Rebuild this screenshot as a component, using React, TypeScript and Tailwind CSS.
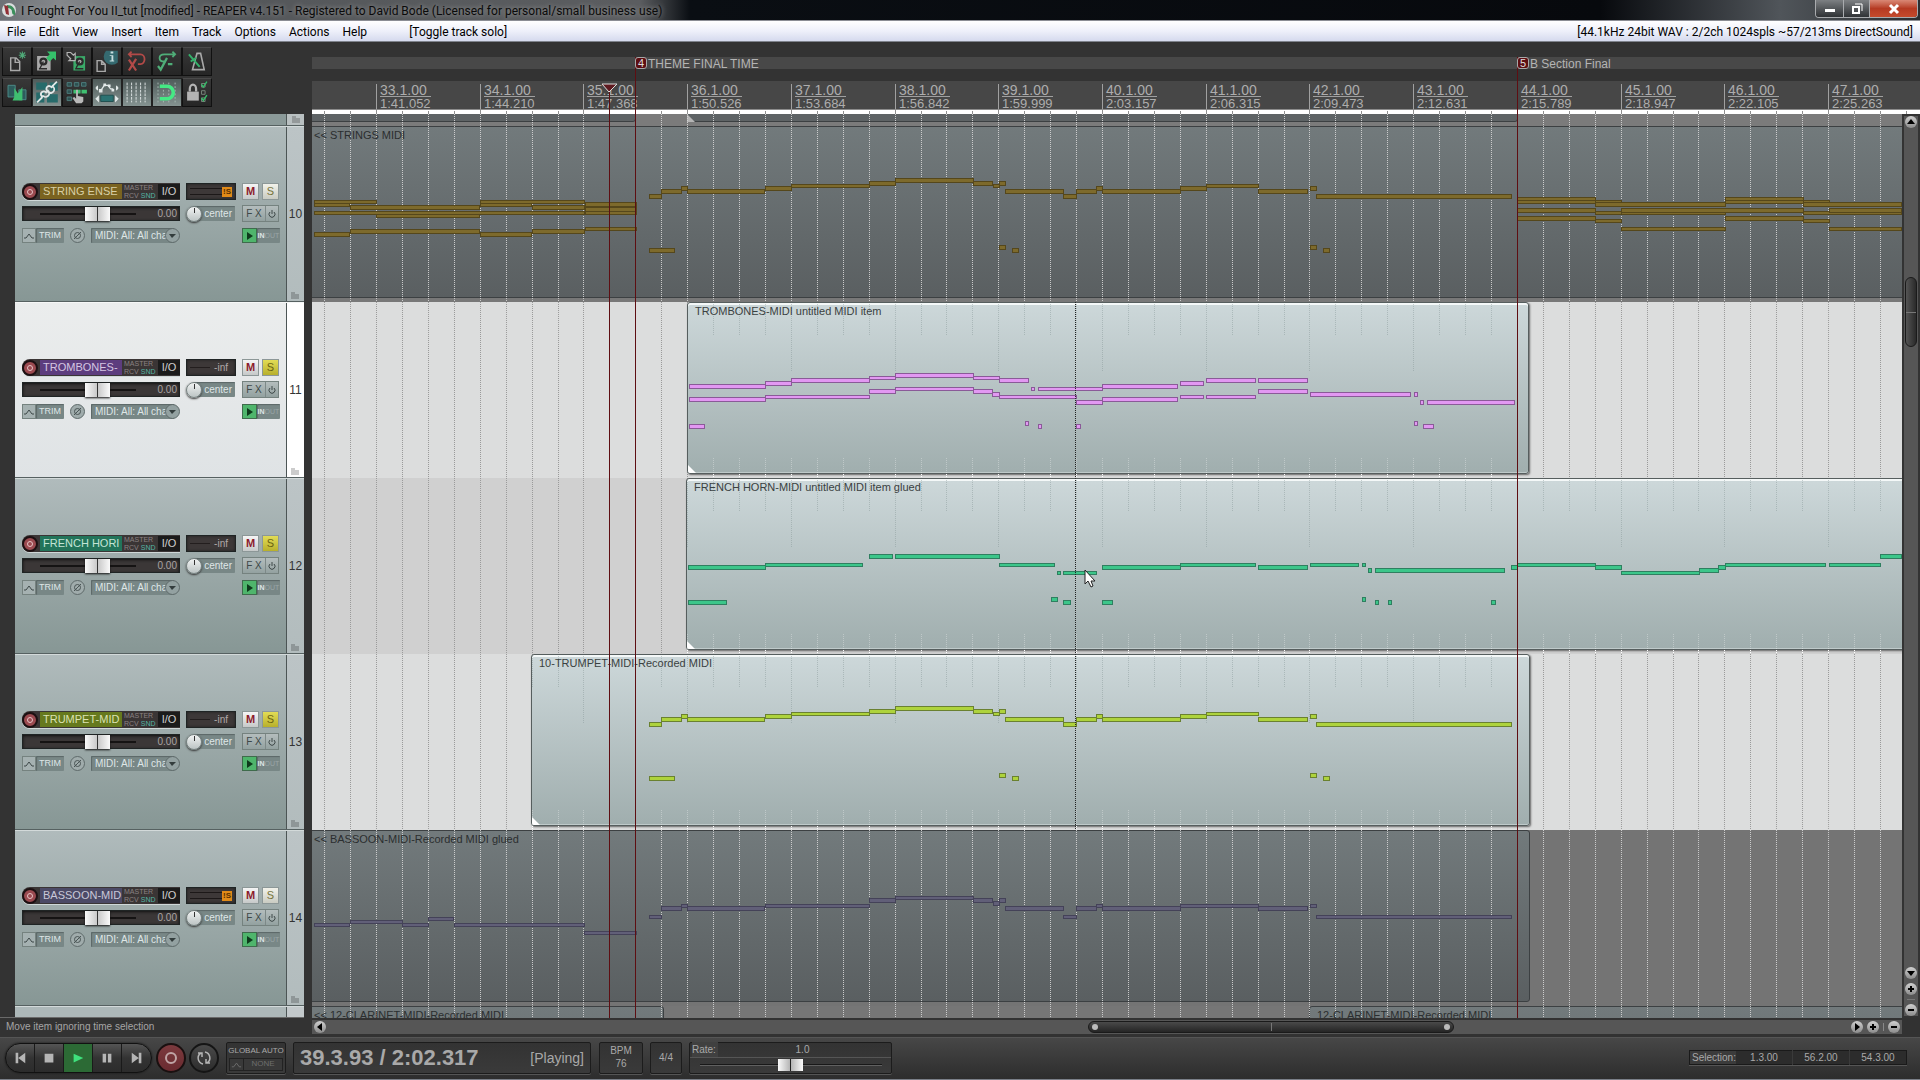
import type { ReactNode } from "react";

type Note = [number, number, number, number];

type Clip = {
  label: string;
  start: number;
  end?: number;
  corner?: boolean;
};

type Track = {
  id: number;
  name: string;
  nameClass: string;
  selected?: boolean;
  solo?: boolean;
  dim?: boolean;
  laneClass: string;
  clips: Clip[];
  notes: Note[];
  fill: string;
  edge: string;
};

// x in the note tables is counted from the window's left side
const ORIGIN = 312;
const BEAT = 25.93;
const FIRST_MEASURE = 64;

const beats = Array.from({ length: 62 }, (_, i) => {
  const k = i - 2;
  return { x: Math.round(FIRST_MEASURE + k * BEAT), measure: k % 4 === 0 };
});

const ruler = [
  ["33.1.00", "1:41.052"],
  ["34.1.00", "1:44.210"],
  ["35.1.00", "1:47.368"],
  ["36.1.00", "1:50.526"],
  ["37.1.00", "1:53.684"],
  ["38.1.00", "1:56.842"],
  ["39.1.00", "1:59.999"],
  ["40.1.00", "2:03.157"],
  ["41.1.00", "2:06.315"],
  ["42.1.00", "2:09.473"],
  ["43.1.00", "2:12.631"],
  ["44.1.00", "2:15.789"],
  ["45.1.00", "2:18.947"],
  ["46.1.00", "2:22.105"],
  ["47.1.00", "2:25.263"],
];

const markers = [
  { num: "4", text: "THEME FINAL TIME", x: 323 },
  { num: "5", text: "B Section Final", x: 1205 },
];

// melody shared by the strings and the trumpet
const melody: Note[] = [
  [649, 68, 13, 5], [661, 63, 21, 5], [681, 60, 7, 5], [687, 63, 78, 5], [765, 60, 27, 5],
  [791, 58, 79, 4], [869, 55, 27, 5], [895, 52, 79, 5], [973, 55, 20, 5], [993, 58, 7, 4],
  [999, 55, 7, 5], [1005, 63, 59, 5], [1063, 68, 14, 5], [1076, 63, 21, 5], [1096, 60, 7, 5],
  [1102, 63, 79, 5], [1180, 60, 27, 5], [1206, 58, 53, 4], [1258, 63, 50, 5], [1310, 60, 7, 5],
  [1316, 68, 196, 5], [649, 122, 26, 5], [999, 119, 7, 5], [1012, 122, 7, 5], [1310, 119, 7, 5],
  [1323, 122, 7, 5],
];

const strings: Note[] = [
  [314, 74, 63, 4], [314, 77, 36, 4], [350, 79, 130, 5], [376, 88, 104, 4], [314, 85, 271, 4],
  [480, 74, 105, 4], [480, 77, 52, 4], [532, 79, 53, 5], [585, 76, 52, 5], [585, 81, 52, 5],
  [585, 85, 52, 4], [314, 106, 36, 5], [350, 103, 130, 5], [480, 106, 52, 5], [532, 103, 53, 5],
  [585, 101, 52, 4],
  ...melody,
  [1517, 74, 79, 4], [1517, 71, 79, 4], [1595, 74, 27, 4], [1595, 76, 131, 5], [1517, 82, 79, 5],
  [1595, 85, 27, 4], [1621, 85, 105, 4], [1621, 82, 183, 5], [1517, 90, 79, 5], [1595, 93, 27, 4],
  [1621, 101, 105, 4], [1725, 74, 79, 4], [1725, 71, 79, 4], [1803, 74, 27, 4], [1803, 76, 99, 5],
  [1803, 85, 99, 4], [1829, 82, 73, 5], [1725, 90, 79, 5], [1803, 93, 27, 4], [1829, 101, 73, 4],
];

const trombones: Note[] = [
  [689, 82, 77, 5], [765, 79, 27, 5], [791, 76, 79, 5], [869, 74, 27, 4], [895, 71, 79, 5],
  [973, 74, 27, 4], [999, 76, 30, 5], [1031, 85, 4, 4], [1038, 85, 65, 4], [1102, 82, 76, 5],
  [1180, 79, 24, 5], [1206, 76, 50, 5], [1258, 76, 50, 5], [689, 95, 77, 5], [765, 93, 105, 4],
  [869, 87, 27, 5], [895, 85, 79, 4], [973, 87, 20, 5], [992, 90, 8, 5], [999, 93, 78, 4],
  [1076, 98, 27, 5], [1102, 95, 76, 5], [1180, 93, 24, 4], [1206, 93, 50, 4], [1258, 87, 50, 5],
  [1310, 90, 101, 5], [1414, 90, 4, 5], [1420, 98, 4, 5], [1427, 98, 88, 5], [689, 122, 16, 5],
  [1025, 119, 4, 5], [1038, 122, 4, 5], [1076, 122, 5, 5], [1414, 119, 4, 5], [1423, 122, 11, 5],
];

const horns: Note[] = [
  [688, 87, 78, 5], [765, 85, 98, 4], [869, 76, 24, 5], [895, 76, 105, 5], [999, 85, 56, 4],
  [1057, 93, 4, 4], [1063, 93, 34, 4], [1102, 87, 79, 5], [1180, 85, 76, 4], [1258, 87, 50, 5],
  [1310, 85, 49, 4], [1362, 85, 4, 4], [1368, 90, 4, 5], [1375, 90, 130, 5], [1511, 87, 7, 5],
  [1517, 85, 79, 4], [1595, 87, 27, 5], [1621, 93, 79, 4], [1699, 90, 20, 5], [1718, 87, 8, 5],
  [1725, 85, 101, 4], [1829, 85, 52, 4], [1880, 76, 22, 5], [688, 122, 39, 5], [1051, 119, 7, 5],
  [1063, 122, 8, 5], [1102, 122, 11, 5], [1362, 119, 4, 5], [1375, 122, 4, 5], [1388, 122, 4, 5],
  [1491, 122, 5, 5],
];

const bassoon: Note[] = [
  [314, 93, 36, 4], [350, 90, 53, 4], [402, 93, 27, 4], [428, 87, 26, 4], [454, 93, 131, 4],
  [584, 101, 53, 4], [649, 85, 13, 4], [661, 76, 21, 5], [681, 74, 7, 4], [687, 76, 78, 5],
  [765, 74, 105, 4], [869, 68, 27, 5], [895, 66, 79, 4], [973, 68, 20, 5], [993, 71, 7, 5],
  [999, 68, 7, 5], [1005, 76, 59, 5], [1063, 85, 14, 4], [1076, 76, 21, 5], [1096, 74, 7, 4],
  [1102, 76, 79, 5], [1180, 74, 79, 4], [1258, 76, 50, 5], [1310, 74, 7, 4], [1316, 85, 196, 4],
];

const tracks: Track[] = [
  {
    id: 10,
    name: "STRING ENSE",
    nameClass: "bg-[#7a6320] text-[#d8cfa6]",
    dim: true,
    laneClass: "bg-[#787878]",
    clips: [{ label: "<< STRINGS MIDI", start: -6 }],
    notes: strings,
    fill: "#7d6a2c",
    edge: "#55471b",
  },
  {
    id: 11,
    name: "TROMBONES-",
    nameClass: "bg-[#5d3d7e] text-[#d5c6e2]",
    selected: true,
    solo: true,
    laneClass: "bg-[#dcdddd]",
    clips: [{ label: "TROMBONES-MIDI untitled MIDI item", start: 375, end: 1217, corner: true }],
    notes: trombones,
    fill: "#e298f2",
    edge: "#8a5a98",
  },
  {
    id: 12,
    name: "FRENCH HORI",
    nameClass: "bg-[#22745a] text-[#c3e4d6]",
    solo: true,
    laneClass: "bg-[#d0d0d0]",
    clips: [{ label: "FRENCH HORN-MIDI untitled MIDI item glued", start: 374, corner: true }],
    notes: horns,
    fill: "#3cc68a",
    edge: "#2f7f60",
  },
  {
    id: 13,
    name: "TRUMPET-MID",
    nameClass: "bg-[#66791d] text-[#dbe2b2]",
    solo: true,
    laneClass: "bg-[#dcdddd]",
    clips: [{ label: "10-TRUMPET-MIDI-Recorded MIDI", start: 219, end: 1218, corner: true }],
    notes: melody,
    fill: "#aed33c",
    edge: "#6a8130",
  },
  {
    id: 14,
    name: "BASSOON-MID",
    nameClass: "bg-[#4c4a66] text-[#c9c8d8]",
    dim: true,
    laneClass: "bg-[#747474]",
    clips: [{ label: "<< BASSOON-MIDI-Recorded MIDI glued", start: -6, end: 1218 }],
    notes: bassoon,
    fill: "#615f78",
    edge: "#444258",
  },
];

const toolButtons: { label: string; on?: boolean; icon: ReactNode }[] = [
  {
    label: "New project",
    icon: (
      <g fill="none" stroke="#a9a9a9" strokeWidth="1.6">
        <path d="M8 11h6l4 4v10H8z M13 11v5h5" />
        <path stroke="#4fa878" strokeWidth="1.2" d="M21 4v8M17 8h8M18 5l6 6M24 5l-6 6" />
      </g>
    ),
  },
  {
    label: "Open project",
    icon: (
      <g>
        <path fill="#a9a9a9" d="M4 9h12v4h3v12H4z" />
        <circle cx="11" cy="15" r="4.5" fill="#2c2c2c" />
        <circle cx="11" cy="15" r="2" fill="#a9a9a9" />
        <path stroke="#2c2c2c" strokeWidth="1.5" d="M11 15l-4 8M6 23h9" />
        <path fill="#35c06a" d="M15 4h10v10l-3-3-4 4-4-4 4-4z" />
      </g>
    ),
  },
  {
    label: "Save project",
    icon: (
      <g>
        <path fill="#3aa968" d="M11 9h13v16H11z" />
        <circle cx="18" cy="15" r="4.5" fill="#2c2c2c" />
        <circle cx="18" cy="15" r="2" fill="#a9a9a9" />
        <path stroke="#2c2c2c" strokeWidth="1.5" d="M18 15l-4 7M13 23h9" />
        <path fill="#2c2c2c" stroke="#b4b4b4" strokeWidth="1.3" d="M4 5h4l3 3 2-2v8H6l2-2-4-4z" />
      </g>
    ),
  },
  {
    label: "Project settings",
    icon: (
      <g>
        <path fill="none" stroke="#a9a9a9" strokeWidth="1.6" d="M4 14h5l4 4v8H4z M9 14v4h4" />
        <path fill="#356a70" d="M14 3h13v13a9 9 0 0 1-13-13z" />
        <path fill="#c9dfe0" d="M19 4h3v2h-3zM18 8h4v6h1v1h-5v-1h2V9h-2z" />
      </g>
    ),
  },
  {
    label: "Undo",
    icon: (
      <g fill="none" stroke="#b34a48" strokeWidth="2">
        <path d="M6 7h13a4 5 0 0 1 0 11h-3M9 4L6 7l3 3" />
        <path strokeWidth="2.5" d="M6 13l8 12M14 12L6 25" />
      </g>
    ),
  },
  {
    label: "Redo",
    icon: (
      <g fill="none" stroke="#4fae78" strokeWidth="2">
        <path d="M24 7H12c-7 0-7 8 0 8M21 4l3 3-3 3" />
        <path strokeWidth="2.5" d="M5 20l3 4 7-13M16 18h5" />
      </g>
    ),
  },
  {
    label: "Metronome",
    icon: (
      <g fill="none" stroke="#a9a9a9" strokeWidth="1.8">
        <path d="M15 6h4l4 18H10z" />
        <path stroke="#35b06a" strokeWidth="2.2" d="M6 7l12 14M8 15l6-4" />
      </g>
    ),
  },
  {
    label: "Auto crossfade",
    icon: (
      <g>
        <path fill="#2d5c5c" stroke="#4f8e8c" d="M5 7h8v13H5zM17 12h8v11h-8z" />
        <path fill="#3fbf70" d="M12 20V10l4 6 5-7v15H10z" />
      </g>
    ),
  },
  {
    label: "Item grouping",
    on: true,
    icon: (
      <g>
        <path fill="#276b6b" d="M3 4h12v8H3zM18 4h9v9h-9zM3 15h9v11H3zM15 17h12v9H15z" />
        <path fill="none" stroke="#e2e8e8" strokeWidth="2" d="M4 26l6-6M9 19a3 3 0 0 1 5-4l2-2a3 3 0 0 1-5 6zM15 13a3 3 0 0 1 5-4l1-1a3 3 0 0 1-4 7zM21 8l5-5" />
      </g>
    ),
  },
  {
    label: "Ripple editing",
    icon: (
      <g>
        <path fill="#2d5050" stroke="#4f8080" d="M4 4h5v4H4zM12 4h5v4h-5zM20 4h5v4h-5zM4 12h5v4H4zM4 20h5v4H4z" />
        <path fill="#3fbf70" d="M11 12h8v4h-8zM20 12h6v4h-6z" />
        <path fill="#b9b9b9" d="M14 12h2v7l6 1v5l-2 2h-6l-4-6 2-1 2 2z" />
      </g>
    ),
  },
  {
    label: "Move envelope points",
    on: true,
    icon: (
      <g>
        <path fill="none" stroke="#e4eaea" strokeWidth="1.4" d="M8 13l4-6h4l3 4h3M4 8v4M26 8v4" />
        <path fill="#e4eaea" d="M6 11h4v4H6zM11 5h3v3h-3zM16 6h3v3h-3zM20 11h3v3h-3zM2 10l3-3v6zM28 10l-3-3v6zM2 22l4-4v8zM28 22l-4-4v8z" />
        <path fill="#2b7272" stroke="#1e4c4c" d="M8 18h14v7H8z" />
      </g>
    ),
  },
  {
    label: "Grid lines",
    on: true,
    icon: <path fill="none" stroke="#e4eaea" strokeWidth="1" strokeDasharray="3 1" d="M4 4v22M9 4v22M14 4v22M19 4v22M24 4v22" />,
  },
  {
    label: "Snap",
    on: true,
    icon: (
      <g fill="none">
        <path stroke="#a8bcb6" strokeDasharray="2 2" d="M5 4v22M11 4v22M17 4v22M24 4v22" />
        <path stroke="#45e884" strokeWidth="4" d="M7 8h8a7 7 0 0 1 0 14H7" />
      </g>
    ),
  },
  {
    label: "Locking",
    icon: (
      <g>
        <path fill="#b4b4b4" d="M4 14h13v10H4z" />
        <path fill="none" stroke="#b4b4b4" strokeWidth="2.5" d="M7 14v-3a3 4 0 0 1 7 0v3" />
        <path fill="none" stroke="#7c8a80" d="M20 5h4v4h-4zM20 13h4v4h-4zM20 21h4v4h-4z" />
        <path fill="none" stroke="#35c06a" strokeWidth="1.5" d="M20 6l2 3 4-6M20 21l2 3 4-6" />
      </g>
    ),
  },
];

const roundButton =
  "flex size-3 shrink-0 items-center justify-center rounded-full bg-gradient-to-b from-[#d0d0d0] to-[#8c8c8c] text-black";

function RoundButton({ label, d }: { label: string; d: string }) {
  return (
    <button aria-label={label} className={roundButton}>
      <svg viewBox="0 0 12 12" className="size-3" fill="currentColor">
        <path d={d} />
      </svg>
    </button>
  );
}

const PLUS = "M5 3h2v2h2v2H7v2H5V7H3V5h2z";
const MINUS = "M3 5h6v2H3z";

function TitleBar() {
  return (
    <header className="flex h-[21px] shrink-0 items-center border-b border-[#8b8d94] bg-[linear-gradient(90deg,#6d7176_0px,#85888c_60px,#54575a_220px,#5b5d60_640px,#0a0e13_690px,#07090d_1600px,#50555a_1780px,#2a2d30_1920px)] pl-[2px]">
      <svg viewBox="0 0 16 16" className="size-4">
        <circle cx="7" cy="8" r="7" fill="#d9dede" />
        <path fill="#3b8f5c" d="M5 3c5 0 9 3 8 10-2 0-3-1-3-3 0-3-2-4-5-4z" />
        <path fill="#8f2f35" d="M2 3l4 1 1 9-3-1z" />
      </svg>
      <h1 className="ml-[3px] pt-px whitespace-nowrap font-['Roboto','Open_Sans',sans-serif] text-[12px] leading-[18px] text-[#0a0a0a] [text-shadow:0_0_5px_#a5a5a5]">
        I Fought For You II_tut [modified] - REAPER v4.151 - Registered to David Bode (Licensed for personal/small business use)
      </h1>
      <div className="mr-[2px] ml-auto flex h-[18px] self-start overflow-hidden rounded-b border border-t-0 border-[#a9abae]">
        <button aria-label="Minimize" className="flex w-7 items-center justify-center border-r border-[#a9abae] bg-gradient-to-b from-[#7d8083] to-[#303336]">
          <span className="mt-1 h-[3px] w-[10px] bg-white" />
        </button>
        <button aria-label="Restore" className="flex w-[26px] items-center justify-center border-r border-[#a9abae] bg-gradient-to-b from-[#7d8083] to-[#303336]">
          <svg viewBox="0 0 12 12" className="size-3" fill="none" stroke="#fff" strokeWidth="2">
            <path d="M2 4h6v6H2z" />
            <path strokeWidth="1" d="M4 1h7v7" />
          </svg>
        </button>
        <button aria-label="Close" className="flex w-[47px] items-center justify-center bg-gradient-to-b from-[#d98875] via-[#b53a22] to-[#c44a2c]">
          <svg viewBox="0 0 12 12" className="size-3" stroke="#fff" strokeWidth="3">
            <path d="M2 2l8 8M10 2l-8 8" />
          </svg>
        </button>
      </div>
    </header>
  );
}

function MenuBar() {
  const items = ["File", "Edit", "View", "Insert", "Item", "Track", "Options", "Actions", "Help"];
  return (
    <nav className="flex h-[21px] shrink-0 items-center border-b border-[#7f838c] bg-gradient-to-b from-white via-[#eef0fa] to-[#d5daee] px-[7px] pt-[2px] font-['Roboto','Open_Sans',sans-serif] text-[12px] leading-[18px] text-black">
      <ul className="flex gap-[13px]">
        {items.map((item) => (
          <li key={item}>
            <button>{item}</button>
          </li>
        ))}
      </ul>
      <span className="ml-[42px]">[Toggle track solo]</span>
      <span className="ml-auto">[44.1kHz 24bit WAV : 2/2ch 1024spls ~57/213ms DirectSound]</span>
    </nav>
  );
}

function Toolbar() {
  return (
    <div className="h-[72px] shrink-0 pt-[5px] pl-[2px]">
      <div className="grid w-[210px] grid-cols-7 gap-y-[2px]">
        {toolButtons.map((b) => (
          <button
            key={b.label}
            aria-label={b.label}
            className={`h-[29px] border ${
              b.on
                ? "border-[#222] bg-gradient-to-b from-[#4f5b5a] to-[#859391]"
                : "border-t-[#4a4a4a] border-r-[#111] border-b-[#111] border-l-[#111] bg-gradient-to-b from-[#383838] to-[#262626]"
            }`}
          >
            <svg viewBox="0 0 30 30" className="size-full">
              {b.icon}
            </svg>
          </button>
        ))}
      </div>
    </div>
  );
}

function FolderIcon() {
  return (
    <svg viewBox="0 0 8 7" className="h-[7px] w-2 fill-black/20">
      <path d="M0 0h4v2h4v5H0z" />
    </svg>
  );
}

function TrackPanel({ track }: { track: Track }) {
  const well = "rounded-[1px] bg-[#788786] text-[#dfe6e6] shadow-[inset_1px_1px_1px_#5b6868]";
  return (
    <li
      className={`flex h-44 shrink-0 border-t border-b border-b-[#566161] ${
        track.selected
          ? "border-t-[#f6f7f7] bg-gradient-to-b from-[#ebeded] to-[#dfe3e5]"
          : "border-t-[#d3dada] bg-gradient-to-b from-[#b0bbbc] to-[#879795]"
      }`}
    >
      <div className="flex flex-1 flex-col gap-[5px] pt-14 pl-[7px]">
        <div className="flex h-[17px] items-center">
          <div className="flex h-[17px] w-[158px] items-center rounded-l-lg bg-[#3a3535] shadow-[0_1px_0_#cfd8d8]">
            <button aria-label={`Record arm ${track.name}`} className="flex size-4 shrink-0 items-center justify-center rounded-full border-2 border-[#1d1012] bg-[#9b4a50]">
              <span className="size-[6px] rounded-full border border-[#e5c3c5]" />
            </button>
            <span className={`ml-[2px] h-[15px] w-[82px] shrink-0 pl-[3px] text-[11px] leading-[15px] whitespace-nowrap ${track.nameClass}`}>
              {track.name}
            </span>
            <span className="ml-[2px] flex w-[34px] shrink-0 flex-col text-[7px] leading-[8px] text-[#8a8282]">
              <span>MASTER</span>
              <span>
                RCV <span className="text-[#53b3a4]">SND</span>
              </span>
            </span>
            <button className="h-[15px] flex-1 bg-[#1b1b1b] text-[11px] leading-[15px] text-[#cfcfcf]">I/O</button>
          </div>
          <div className="ml-[6px] flex h-[17px] w-[50px] items-center justify-end border border-[#1f2424] bg-[#3d3838] px-[3px] shadow-[inset_0_0_3px_#1f1f1f]">
            {track.solo ? (
              <>
                <span className="h-px flex-1 bg-[#231e1e]" />
                <span className="px-1 text-[10px] text-[#b0a8a8]">-inf</span>
              </>
            ) : (
              <>
                <span className="h-[7px] flex-1 border-y border-[#1c1818]" />
                <span className="h-[10px] w-[10px] bg-[#e08a18] text-center text-[8px] leading-[10px] font-bold text-[#5a3000]">!S</span>
              </>
            )}
          </div>
          <button aria-label={`Mute ${track.name}`} className="ml-[6px] h-[17px] w-[17px] border border-[#8c9797] bg-gradient-to-b from-[#f5f5f5] to-[#c6c9c9] text-[11px] leading-[15px] font-bold text-[#8c1c2c]">
            M
          </button>
          <button
            aria-label={`Solo ${track.name}`}
            className={`ml-[3px] h-[17px] w-[17px] border border-[#8c9797] text-[11px] leading-[15px] ${
              track.solo ? "bg-gradient-to-b from-[#e2dc55] to-[#b8b02c] text-[#6b6412]" : "bg-gradient-to-b from-[#f2f2ea] to-[#c9cbc2] text-[#77743a]"
            }`}
          >
            S
          </button>
        </div>

        <div className="flex h-[17px] items-center">
          <div className="flex h-[15px] w-[158px] items-center border border-[#1f2424] bg-[#3b3737] pl-[17px] shadow-[inset_0_1px_3px_#111]">
            <input
              type="range"
              aria-label={`Volume ${track.name}`}
              defaultValue={63}
              className="h-[13px] w-24 appearance-none bg-[linear-gradient(#151313,#151313)] bg-[length:100%_2px] bg-center bg-no-repeat [&::-webkit-slider-thumb]:h-[14px] [&::-webkit-slider-thumb]:w-[25px] [&::-webkit-slider-thumb]:appearance-none [&::-webkit-slider-thumb]:bg-[linear-gradient(90deg,#fafafa,#c9c9c9_12px,#333_12px,#333_13px,#c9c9c9_13px,#fafafa)] [&::-webkit-slider-thumb]:shadow-[0_1px_2px_#111]"
            />
            <span className="ml-auto pr-[2px] text-[10px] text-[#aaa3a3]">0.00</span>
          </div>
          <button aria-label={`Pan ${track.name}`} className="relative z-10 ml-[6px] flex size-4 shrink-0 justify-center rounded-full border border-[#75807f] bg-gradient-to-b from-[#f1f3f3] to-[#bcc4c4] shadow-[0_1px_2px_#333]">
            <span className="mt-px h-[5px] w-px bg-[#333]" />
          </button>
          <span className={`-ml-2 h-[15px] w-[41px] pr-[3px] text-right text-[10px] leading-[15px] ${well}`}>center</span>
          <div className="ml-[7px] flex h-[17px] w-[37px] border border-[#75827f] bg-gradient-to-b from-[#b4bdbd] to-[#93a1a0] text-[#3e4848]">
            <button className="w-[23px] border-r border-[#7d8988] text-[10px] leading-[15px]">F X</button>
            <button aria-label={`Bypass ${track.name}`} className="flex flex-1 items-center justify-center">
              <svg viewBox="0 0 10 10" className="size-[10px]" fill="none" stroke="currentColor">
                <path d="M3 3a3 3 0 1 0 4 0M5 1v4" />
              </svg>
            </button>
          </div>
        </div>

        <div className="mt-px flex h-[15px] items-center">
          <button aria-label={`Envelope ${track.name}`} className="h-[15px] w-[14px] border border-[#75827f] bg-[#a5b1b1] text-[#3e4848]">
            <svg viewBox="0 0 12 13" className="size-full" fill="none" stroke="currentColor">
              <path d="M1 9h2l3-4 3 4h2" />
            </svg>
          </button>
          <span className={`h-[15px] w-7 pl-[3px] text-[9px] leading-[15px] ${well}`}>TRIM</span>
          <button aria-label={`Phase ${track.name}`} className="ml-[6px] size-[15px] rounded-full border border-[#5e6a6a] bg-[#a0acac] text-[#4a5555]">
            <svg viewBox="0 0 13 13" className="size-full" fill="none" stroke="currentColor">
              <circle cx="6.5" cy="6.5" r="3" />
              <path d="M3 10l7-7" />
            </svg>
          </button>
          <div className="relative ml-[6px] flex h-[15px] w-[89px] items-center">
            <select aria-label={`Input ${track.name}`} className={`block h-[15px] w-[83px] appearance-none pl-1 text-[10px] leading-[15px] ${well}`}>
              <option>MIDI: All: All cha</option>
            </select>
            <span className="pointer-events-none absolute top-0 right-0 flex size-[15px] items-center justify-center rounded-full border border-[#5e6a6a] bg-[#93a1a1] text-[#333d3d]">
              <svg viewBox="0 0 7 4" className="h-1 w-[7px]" fill="currentColor">
                <path d="M0 0h7L3 4z" />
              </svg>
            </span>
          </div>
          <button aria-label={`Monitor ${track.name}`} className="ml-[62px] flex size-[15px] items-center justify-center border border-[#3f6b4c] bg-[#4fb56c]">
            <svg viewBox="0 0 8 8" className="size-2" fill="#0e3a1c">
              <path d="M1 0l6 4-6 4z" />
            </svg>
          </button>
          <span className={`h-[15px] w-[23px] text-center text-[7px] leading-[15px] font-bold whitespace-nowrap ${well}`}>
            IN<span className="font-normal text-[#9aa6a6]">OUT</span>
          </span>
        </div>
      </div>
      <div
        className={`relative flex w-[18px] items-center justify-center border-l border-[#4c5555] text-[12px] text-[#333] ${
          track.selected ? "bg-white" : "bg-gradient-to-b from-[#bcc4c6] to-[#b2bcbd]"
        }`}
      >
        {track.id}
        <span className="absolute right-[5px] bottom-[2px] flex">
          <FolderIcon />
        </span>
      </div>
    </li>
  );
}

function TrackList() {
  return (
    <ul className="flex min-h-0 flex-1 flex-col overflow-hidden pl-[15px]">
      <li className="flex h-3 shrink-0 border-b border-[#566161] bg-[#8b9a99]">
        <span className="ml-auto flex w-[18px] items-center justify-center border-l border-[#4c5555] bg-[#b9c0c1]">
          <FolderIcon />
        </span>
      </li>
      {tracks.map((t) => (
        <TrackPanel key={t.id} track={t} />
      ))}
      <li className="flex flex-1 border-t border-[#d3dada] bg-[#adb8b9]">
        <span className="ml-auto w-[18px] border-l border-[#4c5555] bg-[#c3c9cb]" />
      </li>
    </ul>
  );
}

function RulerHeader() {
  return (
    <div className="flex h-[72px] shrink-0 flex-col text-[#adadad]">
      <div className="mt-[15px] h-3 bg-[#484848]" />
      <div className="relative mt-3 h-7 bg-[#474747]">
        {ruler.map(([bar, time], i) => (
          <div
            key={bar}
            className="absolute top-[3px] flex h-[25px] flex-col border-l border-[#a0a0a0] pl-[3px]"
            style={{ left: Math.round(FIRST_MEASURE + i * 4 * BEAT) }}
          >
            <span className="border-b border-[#a0a0a0] text-[14px] leading-3">{bar}</span>
            <span className="text-[13px] leading-[13px]">{time}</span>
          </div>
        ))}
      </div>
      <svg className="h-[5px] w-full bg-white" shapeRendering="crispEdges">
        <rect width="100%" height="1" fill="#8c8c8c" />
        {beats.map((b) => (
          <rect key={b.x} x={b.x} y={b.measure ? 0 : 2} width="1" height="5" fill="#8f8f8f" />
        ))}
      </svg>
    </div>
  );
}

function GridLines({ color, opacity = 1 }: { color: string; opacity?: number }) {
  return (
    <svg className="absolute inset-0 size-full" shapeRendering="crispEdges">
      <g stroke={color} strokeDasharray="1 1" opacity={opacity}>
        {beats.map((b) => (
          <line key={b.x} x1={b.x} x2={b.x} y1="0" y2="176" />
        ))}
      </g>
    </svg>
  );
}

// grid seen through a clip: dark at its top, light at its bottom, gone between
function ClipGrid({ clip }: { clip: Clip }) {
  const inside = beats.filter((b) => b.x > clip.start && b.x < (clip.end ?? 9999));
  return (
    <svg className="absolute inset-0 size-full" shapeRendering="crispEdges">
      <g strokeDasharray="1 1">
        {inside.map((b) => (
          <g key={b.x}>
            <line x1={b.x} x2={b.x} y1="2" y2={b.measure ? 70 : 34} stroke="#7f9090" opacity="0.4" />
            <line x1={b.x} x2={b.x} y1="156" y2="171" stroke="#fff" opacity="0.3" />
            <line x1={b.x} x2={b.x} y1="172" y2="176" stroke="#fff" />
          </g>
        ))}
      </g>
    </svg>
  );
}

function ClipBox({ clip, dim }: { clip: Clip; dim?: boolean }) {
  return (
    <div
      className={`absolute top-0 h-[172px] overflow-hidden rounded-[3px] border ${
        dim
          ? "border-[#3c4042] bg-gradient-to-b from-[#727a7c] to-[#5a5f61]"
          : "border-[#565e5e] bg-gradient-to-b from-[#cdd8da] to-[#a0aeae] shadow-[inset_0_2px_0_#f4f8f8,inset_0_-1px_0_#bfcaca,1px_1px_2px_#666]"
      }`}
      style={{ left: clip.start, right: clip.end ? undefined : -6, width: clip.end ? clip.end - clip.start : undefined }}
    >
      {clip.corner && (
        <svg viewBox="0 0 8 8" className="absolute bottom-0 left-0 size-2 fill-white">
          <path d="M0 0l8 8H0z" />
        </svg>
      )}
    </div>
  );
}

function ClipLabel({ clip, dim }: { clip: Clip; dim?: boolean }) {
  return (
    <span
      className={`absolute top-[2px] text-[11px] leading-[15px] whitespace-nowrap ${dim ? "text-[#2b2e2f]" : "text-[#3a4141]"}`}
      style={{ left: clip.start + 8 }}
    >
      {clip.label}
    </span>
  );
}

function Lane({ track }: { track: Track }) {
  return (
    <div className={`relative h-44 shrink-0 overflow-hidden ${track.laneClass}`}>
      {!track.dim && <GridLines color="#9a9a9a" />}
      {track.clips.map((c) => (
        <ClipBox key={c.label} clip={c} dim={track.dim} />
      ))}
      {track.dim ? <GridLines color="#d6d6d6" opacity={0.9} /> : track.clips.map((c) => <ClipGrid key={c.label} clip={c} />)}
      <svg className="absolute inset-0 size-full" shapeRendering="crispEdges">
        {track.notes.map(([x, y, w, h], i) => (
          <g key={i}>
            <rect x={x - ORIGIN} y={y} width={w} height={h} fill={track.edge} />
            <rect x={x - ORIGIN + 1} y={y + 1} width={w - 2} height={h - 2} fill={track.fill} />
          </g>
        ))}
      </svg>
      {track.clips.map((c) => (
        <ClipLabel key={c.label} clip={c} dim={track.dim} />
      ))}
    </div>
  );
}

function Lanes() {
  return (
    <div className="relative flex min-w-0 flex-1 flex-col overflow-hidden bg-[#787878]">
      <div className="relative h-3 shrink-0 overflow-hidden bg-[#7b7b7b]">
        <div className="absolute -top-2 -left-2 h-4 w-[332px] rounded-[3px] border border-[#3c4042] bg-[#5e6365]" />
        <div className="absolute -top-2 left-[375px] h-4 w-[831px] rounded-[3px] border border-[#3c4042] bg-[#5e6365]" />
        <svg viewBox="0 0 8 8" className="absolute top-0 left-[375px] size-2 fill-[#b5b5b5]">
          <path d="M0 0l8 8H0z" />
        </svg>
        <GridLines color="#d6d6d6" opacity={0.9} />
      </div>
      {tracks.map((t) => (
        <Lane key={t.id} track={t} />
      ))}
      <div className="relative flex-1 overflow-hidden bg-[#767676]">
        <ClipBox dim clip={{ label: "", start: -6, end: 352 }} />
        <ClipBox dim clip={{ label: "", start: 997 }} />
        <GridLines color="#d6d6d6" opacity={0.9} />
        <ClipLabel dim clip={{ label: "<< 12-CLARINET-MIDI-Recorded MIDI", start: -6 }} />
        <ClipLabel dim clip={{ label: "12-CLARINET-MIDI-Recorded MIDI", start: 997 }} />
      </div>
      {/* edit cursor runs through the soloed tracks only */}
      <div className="absolute top-[188px] left-[763px] h-[528px] w-px bg-[repeating-linear-gradient(#222_0px,#222_1px,transparent_1px,transparent_2px)]" />
      <svg viewBox="0 0 12 19" className="absolute top-[455px] left-[772px] h-[19px] w-3">
        <path d="M1 1v14l3-3 3 6 2-1-2-5h4z" fill="#fff" stroke="#222" />
      </svg>
    </div>
  );
}

function VerticalScroll() {
  return (
    <div className="flex w-[18px] shrink-0 flex-col items-center bg-[#333] py-[2px]">
      <div className="relative flex w-[14px] flex-1 flex-col items-center bg-[#565656]">
        <RoundButton label="Scroll up" d="M6 3l4 5H2z" />
        <div className="absolute top-[161px] flex h-[70px] w-[12px] items-center rounded-md border border-[#1a1a1a] bg-gradient-to-r from-[#555] to-[#2a2a2a]">
          <span className="h-px w-full bg-[#777]" />
        </div>
        <div className="mt-auto flex flex-col items-center gap-1">
          <RoundButton label="Scroll down" d="M6 9l4-5H2z" />
          <RoundButton label="Zoom in vertically" d={PLUS} />
          <span className="h-px w-2 bg-[#777]" />
          <RoundButton label="Zoom out vertically" d={MINUS} />
        </div>
      </div>
    </div>
  );
}

function HorizontalScroll() {
  return (
    <div className="h-[19px] shrink-0 bg-[#323232] pt-[2px] pr-[18px]">
      <div className="relative flex h-[14px] items-center bg-[#565656] px-[2px]">
        <RoundButton label="Scroll left" d="M3 6l5-4v8z" />
        <div className="absolute left-[776px] flex h-3 w-[366px] items-center justify-between rounded-md border border-[#1a1a1a] bg-gradient-to-b from-[#4a4a4a] to-[#252525] px-[3px]">
          <span className="size-[6px] rounded-full bg-[#bbb]" />
          <span className="h-2 w-px bg-[#777]" />
          <span className="size-[6px] rounded-full bg-[#bbb]" />
        </div>
        <div className="ml-auto flex items-center gap-1">
          <RoundButton label="Scroll right" d="M9 6L4 2v8z" />
          <RoundButton label="Zoom in" d={PLUS} />
          <span className="h-2 w-px bg-[#888]" />
          <RoundButton label="Zoom out" d={MINUS} />
        </div>
      </div>
    </div>
  );
}

function Arrange() {
  return (
    <section className="relative ml-2 flex min-w-0 flex-1 flex-col">
      <RulerHeader />
      <div className="flex min-h-0 flex-1">
        <Lanes />
        <VerticalScroll />
      </div>
      <HorizontalScroll />

      {markers.map((m) => (
        <div
          key={m.num}
          className="absolute top-[15px] bottom-[19px] flex items-start border-l border-[#5e0e12] text-[12px] leading-[14px] whitespace-nowrap text-[#b4b4b4]"
          style={{ left: m.x }}
        >
          <span className="-ml-px h-3 w-3 rounded-[3px] border border-[#a8a8a8] bg-[#5e0e12] text-center text-[11px] leading-[11px] text-[#ddd]">{m.num}</span>
          <span className="pl-px">{m.text}</span>
        </div>
      ))}
      <div className="absolute top-[50px] bottom-[19px] left-[297px] w-px bg-[#5e0e12]" />
      <svg viewBox="0 0 17 10" className="absolute top-[41px] left-[289px] h-[10px] w-[17px]">
        <path d="M1 1h15L8 9z" fill="#5e1a20" stroke="#ddd" />
      </svg>
    </section>
  );
}

const transport = [
  { label: "Go to start", d: "M3 2h3v12H3zM14 2v12L6 8z" },
  { label: "Stop", d: "M3 3h10v10H3z" },
  { label: "Play", d: "M3 3l11 5-11 5z" },
  { label: "Pause", d: "M3 3h4v10H3zM9 3h4v10H9z" },
  { label: "Go to end", d: "M10 2h3v12h-3zM2 2v12l8-6z" },
];

function TransportBar() {
  const box = "rounded-[2px] border border-[#1c1c1c] bg-gradient-to-b from-[#333] to-[#3a3a3a] shadow-[0_1px_0_#555]";
  return (
    <footer className="flex h-[43px] shrink-0 items-center border-t border-b border-t-[#555] border-b-[#7a7f88] bg-gradient-to-b from-[#474747] to-[#2d2d2d] px-[5px] pb-[2px] text-[#a9a9a9]">
      <div className="flex h-[30px] overflow-hidden rounded-full border border-[#111] bg-gradient-to-b from-[#555] via-[#333] to-[#2c2c2c] shadow-[0_0_2px_#111]">
        {transport.map((t) => (
          <button
            key={t.label}
            aria-label={t.label}
            className={`flex w-[29px] items-center justify-center border-r border-[#1a1a1a] last:border-r-0 ${
              t.label === "Play" ? "bg-[#2c6a35] text-[#3fe07c]" : "text-[#b5b5b5]"
            }`}
          >
            <svg viewBox="0 0 16 16" className="size-[14px]" fill="currentColor">
              <path d={t.d} />
            </svg>
          </button>
        ))}
      </div>
      <button aria-label="Record" className="ml-1 flex size-[30px] items-center justify-center rounded-full border-2 border-[#1a1010] bg-gradient-to-b from-[#7c3a3e] to-[#6a2b30]">
        <span className="size-3 rounded-full border-2 border-[#c0a5a6]" />
      </button>
      <button aria-label="Repeat" className="ml-[3px] flex size-[30px] items-center justify-center rounded-full border-2 border-[#151515] bg-gradient-to-b from-[#4a4a4a] to-[#2c2c2c]">
        <svg viewBox="0 0 16 16" className="size-4" fill="none" stroke="#b5b5b5" strokeWidth="1.5">
          <path d="M7 14a6 6 0 0 1-2-11M9 2a6 6 0 0 1 2 11M2 3h4v4M14 13h-4V9" />
        </svg>
      </button>
      <div className={`ml-[7px] flex h-8 w-[60px] flex-col items-center justify-between p-[2px] ${box}`}>
        <span className="text-[8px] leading-3 whitespace-nowrap">GLOBAL AUTO</span>
        <button className="flex h-[13px] w-full items-center border border-[#222] bg-[#393939] text-[8px] text-[#6e6e6e]">
          <svg viewBox="0 0 14 11" className="h-[11px] w-[14px] border-r border-[#222]" fill="none" stroke="currentColor">
            <path d="M2 8h2l3-4 3 4h2" />
          </svg>
          <span className="flex-1">NONE</span>
        </button>
      </div>
      <div className={`ml-[7px] flex h-8 w-[298px] items-center justify-between px-[6px] ${box}`}>
        <span className="text-[22px] leading-7 font-bold">39.3.93 / 2:02.317</span>
        <span className="text-[14px] leading-7">[Playing]</span>
      </div>
      <label className={`ml-2 flex h-8 w-11 flex-col items-center pt-[2px] text-[10px] leading-3 ${box}`}>
        BPM
        <input defaultValue="76" className="mt-px h-3 w-8 bg-transparent text-center text-[10px]" />
      </label>
      <button className={`ml-[7px] h-8 w-8 text-[10px] ${box}`}>4/4</button>
      <div className={`ml-[7px] flex h-8 w-[203px] flex-col ${box}`}>
        <div className="flex h-[15px] items-center border-b border-[#555] pl-[2px] text-[10px]">
          <label htmlFor="rate" className="w-[26px] bg-[#404040]">
            Rate:
          </label>
          <output className="flex-1 pr-1 text-center">1.0</output>
        </div>
        <div className="flex flex-1 items-center justify-center">
          <input
            id="rate"
            type="range"
            className="h-3 w-[182px] appearance-none bg-[linear-gradient(#181818,#181818_1px,#606060_1px)] bg-[length:100%_2px] bg-center bg-no-repeat [&::-webkit-slider-thumb]:h-3 [&::-webkit-slider-thumb]:w-[25px] [&::-webkit-slider-thumb]:appearance-none [&::-webkit-slider-thumb]:bg-[linear-gradient(90deg,#fafafa,#b5b5b5_12px,#222_12px,#222_13px,#b5b5b5_13px,#fafafa)]"
          />
        </div>
      </div>
      <div className="mr-2 ml-auto flex h-[15px] w-[218px] items-center border border-[#1a1a1a] bg-[#2c2c2c] text-[10px] shadow-[0_1px_0_#555]">
        <span className="h-full w-[46px] bg-[#3b3b3b] pl-[2px] leading-[13px]">Selection:</span>
        {["1.3.00", "56.2.00", "54.3.00"].map((v, i) => (
          <input key={v} aria-label={`Selection ${["start", "end", "length"][i]}`} defaultValue={v} className="w-0 flex-1 border-r border-[#3a3a3a] text-center last:border-r-0" />
        ))}
      </div>
    </footer>
  );
}

export default function App() {
  return (
    <div className="flex h-screen flex-col overflow-hidden bg-[#333] font-['Liberation_Sans',sans-serif]">
      <TitleBar />
      <MenuBar />
      <main className="flex min-h-0 flex-1">
        <aside className="flex w-[304px] shrink-0 flex-col">
          <Toolbar />
          <TrackList />
          <p className="h-5 shrink-0 border-t border-[#6a6a6a] pl-[6px] text-[10px] leading-[18px] text-[#a5a5a5]">Move item ignoring time selection</p>
        </aside>
        <Arrange />
      </main>
      <TransportBar />
    </div>
  );
}
